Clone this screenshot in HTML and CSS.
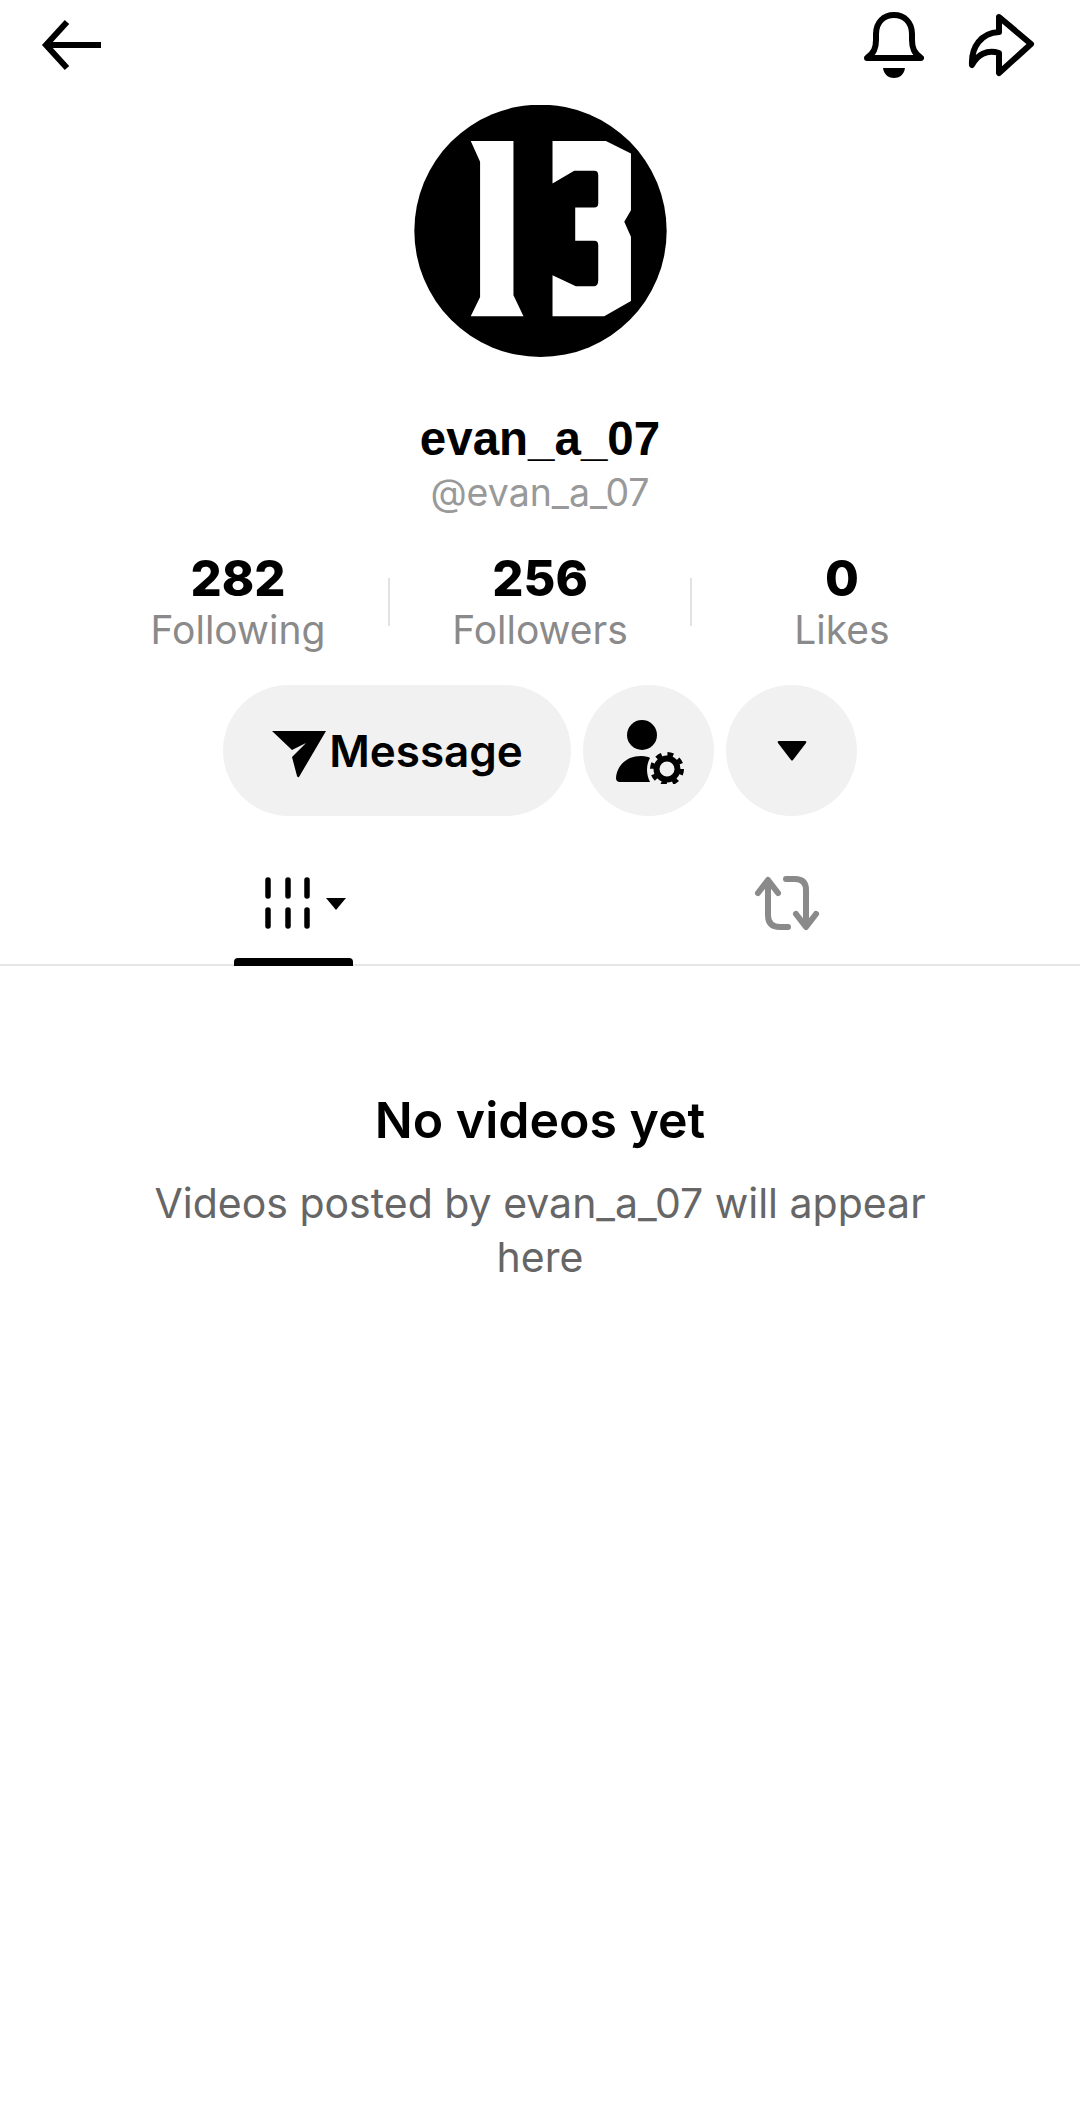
FILE: index.html
```html
<!DOCTYPE html>
<html lang="en">
<head>
  <meta charset="UTF-8" />
  <meta name="viewport" content="width=device-width, initial-scale=1" />
  <title>evan_a_07</title>
  <link rel="stylesheet" href="styles.css">
</head>
<body>

  <div class="top-bar">
    <svg class="back-icon" viewBox="0 0 62 54"><path d="M60 27H5M26 4L5 27l21 23" /></svg>
    <div class="top-actions">
      <svg class="bell-icon" viewBox="0 0 60 66">
        <path class="line" d="M3 46C10 41 12 36 12 28V22C12 10 20 3 30 3S48 10 48 22V28C48 36 50 41 57 46Z" />
        <path class="solid" d="M19 56H41C40 63 35 66 30 66S20 63 19 56Z" />
      </svg>
      <svg class="share-icon" viewBox="0 0 68 66">
        <path class="line" d="M32 5L64 32 32 61V41C20 37 10 43 5 53 4 35 14 21 32 20Z" />
      </svg>
    </div>
  </div>

  <div class="profile">
    <svg class="avatar" viewBox="70 45 758 755">
      <circle cx="449" cy="422" r="378" fill="#000" />
      <path fill="#fff" d="M240 153H368V615L398 678H240L268 620V215Z" />
      <path fill="#fff" d="M485 153H645L720 190V360L700 395L720 440V632L640 678H485V555L555 588H610Q622 586 622 570V465Q622 452 610 452H553V352H610Q622 352 622 340V255Q622 242 610 242H550L485 280Z" />
    </svg>
    <div class="name">evan_a_07</div>
    <div class="handle">@evan_a_07</div>

    <div class="stats">
      <div class="stat"><b>282</b><span>Following</span></div>
      <div class="divider"></div>
      <div class="stat"><b>256</b><span>Followers</span></div>
      <div class="divider"></div>
      <div class="stat"><b>0</b><span>Likes</span></div>
    </div>

    <div class="buttons">
      <button class="msg-btn">
        <svg class="plane-icon" viewBox="0 0 56 48"><path d="M1 1H55L28 47Q27 48 26 46L21 27 35 13 21 20Z" /></svg>
        Message
      </button>
      <button class="round-btn">
        <svg class="friend-icon" viewBox="0 0 72 66">
          <circle cx="29" cy="17" r="15" />
          <path d="M3 60C4 47 14 38 28 38 33 38 36 39 37 40 33 47 33 56 37 64H7Q3 64 3 60Z" />
          <circle class="gear-ring" cx="54" cy="51" r="10.5" />
          <circle class="gear-teeth" cx="54" cy="51" r="15" />
        </svg>
      </button>
      <button class="round-btn">
        <svg class="caret-icon" viewBox="0 0 30 22"><path d="M2 1H28Q30 1 29 3L16 20Q15 21 14 20L1 3Q0 1 2 1Z" /></svg>
      </button>
    </div>
  </div>

  <div class="tabs">
    <div class="tab tab-active">
      <svg class="grid-icon" viewBox="0 0 82 56">
        <path class="bars" d="M3 5V21M23 5V21M42 5V21M3 35V51M23 35V51M42 35V51" />
        <path class="tri" d="M61 23H81L71 35Z" />
      </svg>
    </div>
    <div class="tab">
      <svg class="repost-icon" viewBox="0 0 72 56">
        <path d="M7 18L17 5 27 18M17 6V40Q17 52 29 52H37M35 4H44Q55 4 55 15V51M45 39L55 52 65 39" />
      </svg>
    </div>
  </div>

  <div class="empty">
    <h2>No videos yet</h2>
    <p>Videos posted by evan_a_07 will appear here</p>
  </div>

</body>
</html>
```

FILE: styles.css
```css
* {
  box-sizing: border-box;
}

body {
  margin: 0;
  background: #fff;
  color: #000;
  font-family: "Inter", "Liberation Sans", sans-serif;
}

.top-bar {
  display: flex;
  justify-content: space-between;
  align-items: flex-start;
  padding: 12px 45px 0 41px;
  height: 105px;
}
.top-actions {
  display: flex;
  gap: 43px;
}
.back-icon {
  width: 62px;
  height: 54px;
  margin-top: 6px;
  fill: none;
  stroke: #000;
  stroke-width: 6;
}
.bell-icon {
  width: 60px;
  height: 66px;
}
.share-icon {
  width: 68px;
  height: 66px;
}
.line {
  fill: none;
  stroke: #000;
  stroke-width: 6;
  stroke-linejoin: round;
}
.solid {
  fill: #000;
}

.profile {
  display: flex;
  flex-direction: column;
  align-items: center;
}
.avatar {
  width: 253px;
  height: 252px;
}
.name {
  margin-top: 52px;
  font-family: "Liberation Sans", sans-serif;
  font-size: 47.5px;
  font-weight: bold;
  line-height: 60px;
}
.handle {
  font-size: 37.5px;
  line-height: 48px;
  color: #999;
}

.stats {
  display: flex;
  align-items: center;
  margin-top: 34px;
}
.stat {
  width: 302px;
  display: flex;
  flex-direction: column;
  align-items: center;
}
.stat b {
  font-size: 49px;
  font-weight: 800;
  line-height: 56px;
}
.stat span {
  font-size: 39px;
  line-height: 46px;
  color: #8a8a8a;
}
.divider {
  width: 2px;
  height: 48px;
  margin: 0 -1px;
  background: #e2e2e2;
}

.buttons {
  display: flex;
  align-items: center;
  gap: 12px;
  margin-top: 32px;
}
.buttons button {
  height: 131px;
  border: 0;
  border-radius: 66px;
  background: #f1f1f1;
  display: flex;
  align-items: center;
  justify-content: center;
  padding: 0;
}
.msg-btn {
  width: 348px;
  gap: 2px;
  color: #000;
  font-family: "Inter", "Liberation Sans", sans-serif;
  font-size: 44px;
  font-weight: 600;
}
.round-btn {
  width: 131px;
}
.plane-icon {
  width: 56px;
  height: 48px;
  margin-top: 6px;
}
.friend-icon {
  width: 72px;
  height: 66px;
}
.gear-ring {
  fill: none;
  stroke: #000;
  stroke-width: 6;
}
.gear-teeth {
  fill: none;
  stroke: #000;
  stroke-width: 4;
  stroke-dasharray: 5.89 5.89;
}
.caret-icon {
  width: 30px;
  height: 22px;
}

.tabs {
  display: flex;
  padding: 0 47px;
  margin-top: 59px;
  height: 91px;
  border-bottom: 2px solid #e6e6e6;
}
.tab {
  flex: 1;
  display: flex;
  justify-content: center;
  position: relative;
}
.tab-active::after {
  content: "";
  position: absolute;
  bottom: -2px;
  left: 187px;
  width: 119px;
  height: 8px;
  background: #000;
  border-radius: 4px 4px 0 0;
}
.grid-icon {
  width: 82px;
  height: 56px;
  margin-left: 25px;
}
.grid-icon .bars {
  fill: none;
  stroke: #000;
  stroke-width: 5.5;
  stroke-linecap: round;
}
.grid-icon .tri {
  fill: #000;
}
.repost-icon {
  width: 72px;
  height: 56px;
  fill: none;
  stroke: #8a8a8a;
  stroke-width: 6;
  stroke-linecap: round;
  stroke-linejoin: round;
}

.empty {
  text-align: center;
  padding: 0 140px;
  margin-top: 124px;
}
.empty h2 {
  margin: 0;
  font-size: 50px;
  font-weight: 600;
  line-height: 60px;
}
.empty p {
  margin: 26px 0 0;
  font-size: 41px;
  line-height: 54px;
  color: #666;
}
```
